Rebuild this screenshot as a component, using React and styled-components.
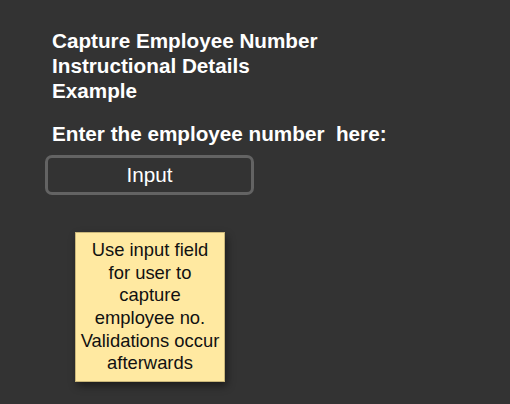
import React from "react";
import styled, { createGlobalStyle } from "styled-components";

const GlobalStyle = createGlobalStyle`
  html, body {
    margin: 0;
    padding: 0;
    background: #333333;
  }
  body {
    font-family: "Liberation Sans", Arial, sans-serif;
  }
`;

const Page = styled.div`
  width: 510px;
  height: 404px;
  box-sizing: border-box;
  padding: 28px 0 0 45px;
  display: flex;
  flex-direction: column;
  align-items: flex-start;
`;

const Heading = styled.div`
  padding-left: 7px;
  color: #ffffff;
  font-weight: bold;
  font-size: 20.7px;
  line-height: 25px;
`;

const Label = styled.div`
  margin-top: 18px;
  padding-left: 7px;
  color: #ffffff;
  font-weight: bold;
  font-size: 20.7px;
  line-height: 25px;
  white-space: pre;
`;

const InputBox = styled.div`
  margin-top: 9px;
  width: 209px;
  height: 40px;
  box-sizing: border-box;
  border: 3px solid #636363;
  border-radius: 7px;
  display: flex;
  align-items: center;
  justify-content: center;
  color: #ffffff;
  font-size: 20.7px;
`;

const Note = styled.div`
  margin: 37px 0 0 30px;
  width: 150px;
  height: 150px;
  box-sizing: border-box;
  background: #ffe9a1;
  border: 1px solid #c9b67a;
  box-shadow: 2px 4px 8px rgba(0, 0, 0, 0.45);
  display: flex;
  flex-direction: column;
  align-items: center;
  justify-content: center;
  text-align: center;
  color: #111111;
  font-size: 18.4px;
  line-height: 22.6px;
`;

const NoteLine = styled.span`
  display: block;
  white-space: nowrap;
`;

const noteLines = [
  "Use input field",
  "for user to",
  "capture",
  "employee no.",
  "Validations occur",
  "afterwards",
];

export default function App() {
  return (
    <>
      <GlobalStyle />
      <Page>
        <Heading>
          Capture Employee Number
          <br />
          Instructional Details
          <br />
          Example
        </Heading>
        <Label>{"Enter the employee number  here:"}</Label>
        <InputBox>Input</InputBox>
        <Note>
          {noteLines.map((line) => (
            <NoteLine key={line}>{line}</NoteLine>
          ))}
        </Note>
      </Page>
    </>
  );
}
